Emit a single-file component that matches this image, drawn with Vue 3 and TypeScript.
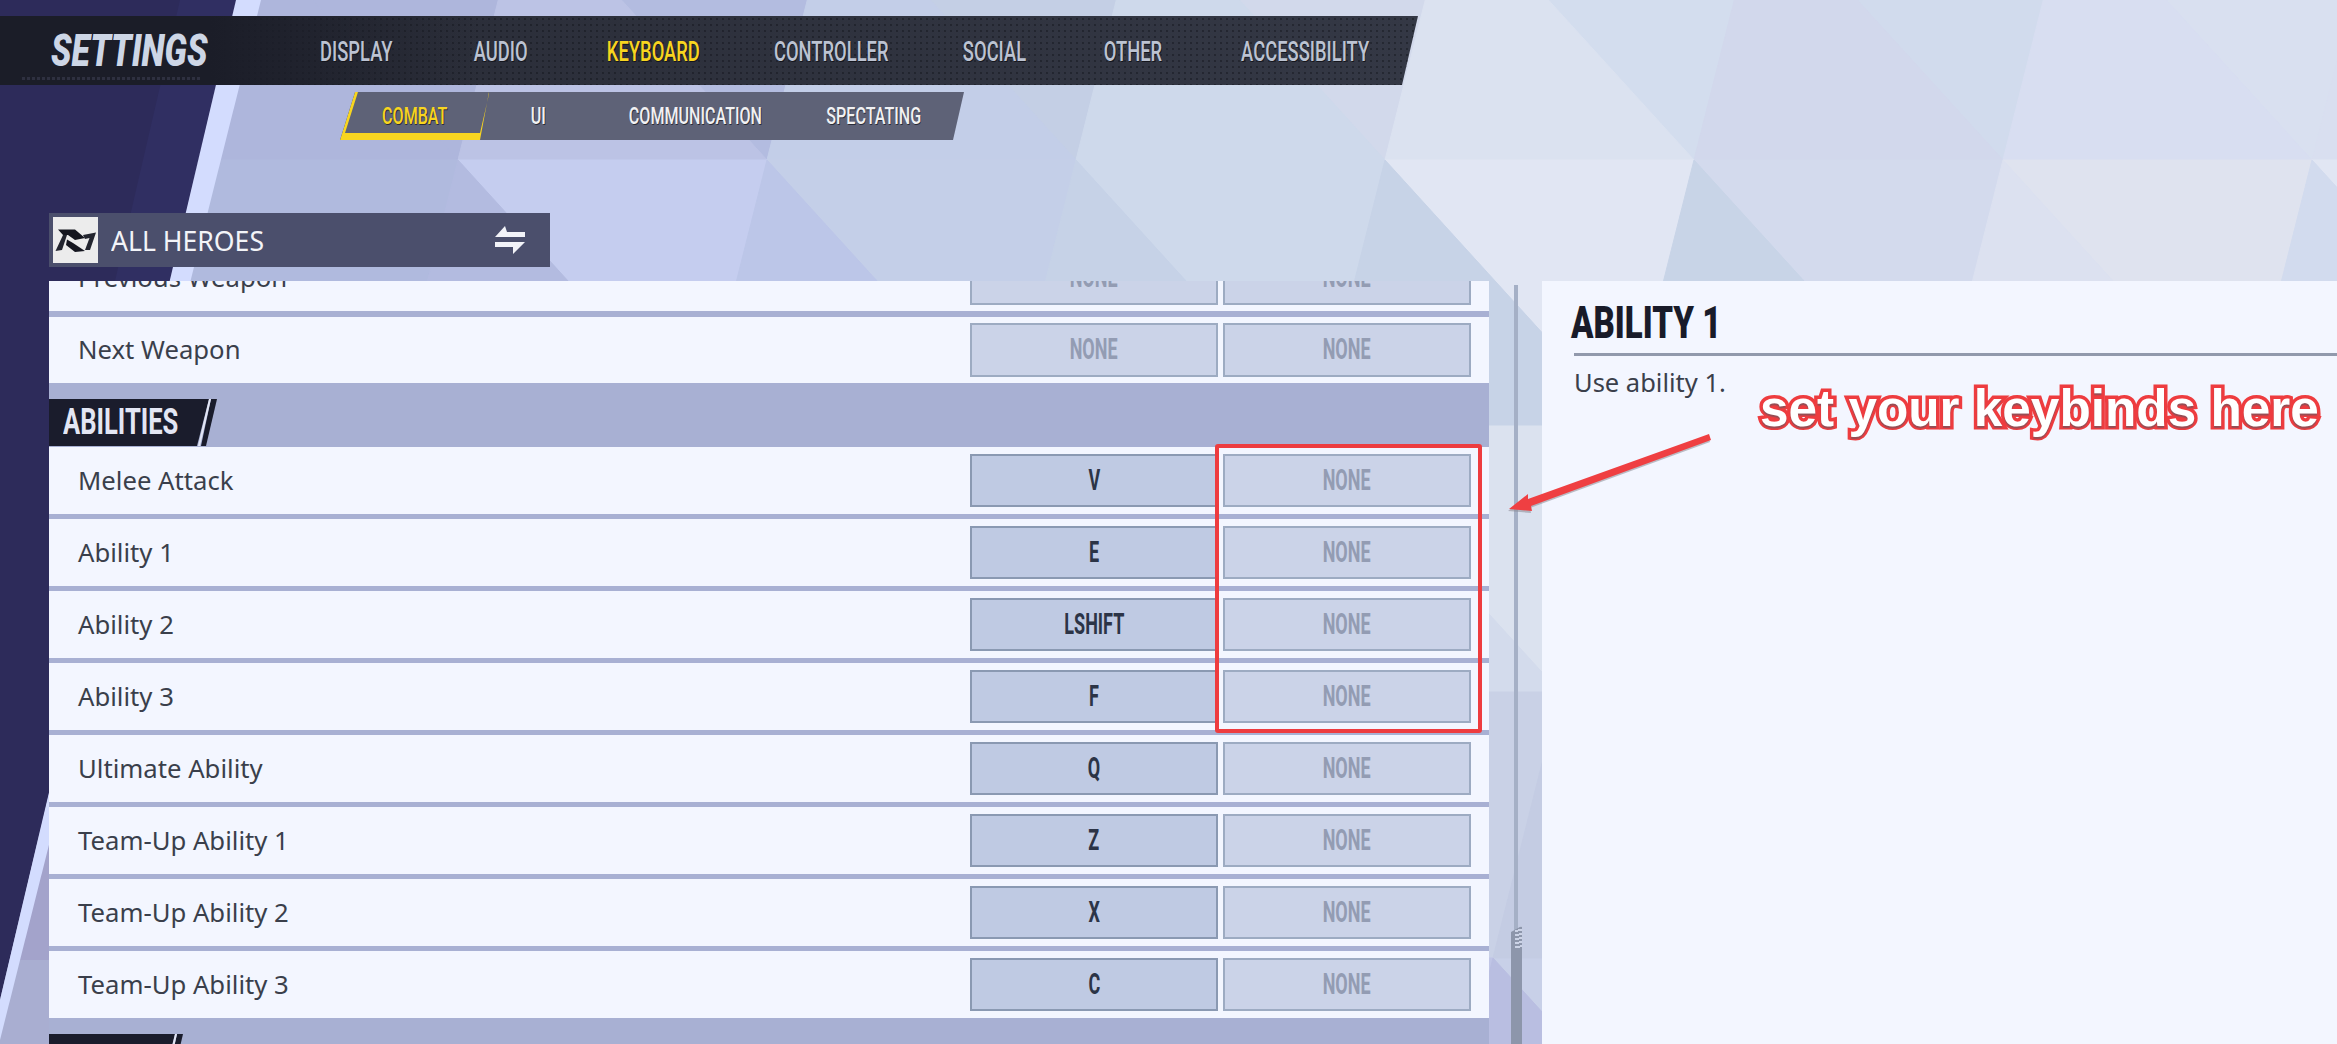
<script setup lang="ts">
type Bind = { label: string; main: string; alt: string };

const navItems = ["DISPLAY", "AUDIO", "KEYBOARD", "CONTROLLER", "SOCIAL", "OTHER", "ACCESSIBILITY"];
const subItems = ["COMBAT", "UI", "COMMUNICATION", "SPECTATING"];

const weaponRows: Bind[] = [
  { label: "Previous Weapon", main: "NONE", alt: "NONE" },
  { label: "Next Weapon", main: "NONE", alt: "NONE" },
];

const abilityRows: Bind[] = [
  { label: "Melee Attack", main: "V", alt: "NONE" },
  { label: "Ability 1", main: "E", alt: "NONE" },
  { label: "Ability 2", main: "LSHIFT", alt: "NONE" },
  { label: "Ability 3", main: "F", alt: "NONE" },
  { label: "Ultimate Ability", main: "Q", alt: "NONE" },
  { label: "Team-Up Ability 1", main: "Z", alt: "NONE" },
  { label: "Team-Up Ability 2", main: "X", alt: "NONE" },
  { label: "Team-Up Ability 3", main: "C", alt: "NONE" },
];

// low-poly backdrop: a skewed lattice, every cell split into two triangles
const at = (r: number, k: number) => `${1694 + 309 * k - 67 * r},${160 + 266 * r}`;

const tris: [number, number, "A" | "B", string][] = [
  [-1, -5, "A", "#aeb6dc"], [-1, -5, "B", "#aeb6dc"],
  [-1, -4, "A", "#b3bce0"], [-1, -4, "B", "#bcc3e5"],
  [-1, -3, "A", "#c4cfe5"], [-1, -3, "B", "#c3cee8"],
  [-1, -2, "A", "#d2d9eb"], [-1, -2, "B", "#ced9eb"],
  [-1, -1, "A", "#d3ddee"], [-1, -1, "B", "#dbe2f0"],
  [-1, 0, "A", "#d1dbed"], [-1, 0, "B", "#d2d8ec"],
  [-1, 1, "A", "#d9e0f0"], [-1, 1, "B", "#d8def1"],
  [-1, 2, "A", "#dfe5f3"], [-1, 2, "B", "#d9dff0"],
  [0, -6, "A", "#b0bade"], [0, -5, "A", "#b0bade"], [0, -5, "B", "#b0bade"],
  [0, -4, "A", "#c5cdef"], [0, -4, "B", "#b3bbe0"],
  [0, -3, "A", "#c4cfe8"], [0, -3, "B", "#bcc6e8"],
  [0, -2, "A", "#ced9eb"], [0, -2, "B", "#c6d2e7"],
  [0, -1, "A", "#e1e6f3"], [0, -1, "B", "#c7d3e7"],
  [0, 0, "A", "#d3daed"], [0, 0, "B", "#c8d4e7"],
  [0, 1, "A", "#dfe3ef"], [0, 1, "B", "#dce1f0"],
  [0, 2, "A", "#e1e6f3"], [0, 2, "B", "#d2dbee"],
  [1, -1, "A", "#dbe2ef"], [1, -1, "B", "#d3dbec"],
  [2, -1, "A", "#c9d1e6"], [2, 0, "B", "#c4cce3"],
  [3, -1, "A", "#c0c5e6"], [3, 0, "B", "#b9bee1"],
];

const polys = tris.map(([r, k, kind, fill]) => ({
  fill,
  points:
    kind === "A"
      ? `${at(r, k)} ${at(r, k + 1)} ${at(r + 1, k + 1)}`
      : `${at(r, k)} ${at(r + 1, k + 1)} ${at(r + 1, k)}`,
}));
</script>

<template>
  <div class="page">
    <svg class="backdrop" width="2337" height="1044" viewBox="0 0 2337 1044">
      <rect width="2337" height="1044" fill="#c8d0e8" />
      <polygon v-for="(p, i) in polys" :key="i" :points="p.points" :fill="p.fill" :stroke="p.fill" stroke-width="1" />
      <polygon points="0,760 60,760 60,960 0,960" fill="#a3a3cb" />
      <polygon points="0,960 60,960 60,1044 0,1044" fill="#a9aed1" />
      <polygon points="0,0 238,0 0,1000" fill="#2d2b5a" />
      <polygon points="180,0 238,0 170,281 115,281" fill="#302f62" />
      <polygon points="236,0 261,0 0,1040 0,1000" fill="#d3dcfe" />
    </svg>

    <header class="topbar">
      <div class="title-cell"><span class="title">SETTINGS</span></div>
      <nav class="nav">
        <div v-for="item in navItems" :key="item" class="nav-cell">
          <span class="nav-text" :class="{ active: item === 'KEYBOARD' }">{{ item }}</span>
        </div>
      </nav>
    </header>

    <div class="subbar">
      <div v-for="item in subItems" :key="item" class="sub-cell" :class="{ active: item === 'COMBAT' }">
        <span class="sub-text">{{ item }}</span>
      </div>
    </div>

    <div class="heroes">
      <div class="hero-logo">
        <svg width="45" height="46" viewBox="0 0 45 46">
          <polygon points="5,12.5 22,12.5 32,21 22,23 15,18 10,18" fill="#15161f" />
          <polygon points="10,18 14,18 9,33 2.5,34" fill="#23252f" />
          <polygon points="14,22.5 20,26 32,34 22,35 13,28" fill="#15161f" />
          <polygon points="30,18 43,15.5 37,33 32,33 36.5,21 32,22" fill="#23252f" />
        </svg>
      </div>
      <span class="hero-name">ALL HEROES</span>
      <svg class="swap" width="30" height="30" viewBox="0 0 30 30">
        <polygon points="0,12 10,1 12,7 30,7 30,12" fill="#f2f3f8" />
        <polygon points="0,17 30,17 18,29 18,22 0,22" fill="#f2f3f8" />
      </svg>
    </div>

    <main class="content">
      <section class="list">
        <div class="scroller">
          <div class="group first">
            <div v-for="row in weaponRows" :key="row.label" class="row">
              <span class="label">{{ row.label }}</span>
              <div class="keys">
                <div class="key empty"><span class="key-text">{{ row.main }}</span></div>
                <div class="key empty"><span class="key-text">{{ row.alt }}</span></div>
              </div>
            </div>
          </div>
          <div class="section">
            <div class="badge"><span class="badge-text">ABILITIES</span></div>
          </div>
          <div class="group">
            <div v-for="row in abilityRows" :key="row.label" class="row">
              <span class="label">{{ row.label }}</span>
              <div class="keys">
                <div class="key" :class="{ empty: row.main === 'NONE' }"><span class="key-text">{{ row.main }}</span></div>
                <div class="key empty"><span class="key-text">{{ row.alt }}</span></div>
              </div>
            </div>
          </div>
          <div class="section next">
            <div class="badge"></div>
          </div>
        </div>
      </section>

      <div class="track">
        <div class="rail"></div>
        <div class="thumb"></div>
      </div>

      <aside class="detail">
        <h2 class="detail-title"><span>ABILITY 1</span></h2>
        <p class="detail-text">Use ability 1.</p>
      </aside>
    </main>

    <div class="callout-box"></div>
    <svg class="callout-arrow" width="2337" height="1044" viewBox="0 0 2337 1044">
      <g transform="translate(-1 2)" fill="#8b8b94" opacity="0.55">
        <polygon points="1709,434 1711,440 1531,506 1532,511 1509,509 1528,494 1528,499" />
      </g>
      <polygon points="1709,434 1711,440 1531,506 1532,511 1509,509 1528,494 1528,499" fill="#ef3f42" />
    </svg>
    <div class="callout-text">set your keybinds here</div>
  </div>
</template>

<style scoped>
.page {
  position: relative;
  width: 2337px;
  height: 1044px;
  overflow: hidden;
  padding-top: 16px;
  box-sizing: border-box;
  font-family: "Roboto", "Liberation Sans", sans-serif;
}

.backdrop {
  position: absolute;
  left: 0;
  top: 0;
}

.topbar {
  position: relative;
  display: flex;
  width: 1418px;
  height: 69px;
  clip-path: polygon(0 0, 100% 0, 1402px 100%, 0 100%);
  background:
    linear-gradient(90deg, #1b1d28 210px, rgba(27, 29, 40, 0) 480px),
    radial-gradient(circle, rgba(14, 16, 22, 0.4) 1px, transparent 1.5px) 0 0 / 6px 6px,
    linear-gradient(90deg, #2a2d38 300px, #343845 100%);
}

.title-cell {
  position: relative;
  width: 279px;
  padding-left: 51px;
  box-sizing: border-box;
  line-height: 69px;
}

.title-cell::after {
  content: "";
  position: absolute;
  left: 22px;
  top: 61px;
  width: 178px;
  height: 3px;
  background: repeating-linear-gradient(90deg, #2e3040 0 3px, transparent 3px 5px);
}

.title {
  display: inline-block;
  font-size: 45px;
  font-weight: 900;
  font-style: italic;
  color: #cdd6e6;
  transform: scaleX(0.75);
  transform-origin: left center;
  white-space: nowrap;
}

.nav {
  display: grid;
  grid-template-columns: 154px 135px 170px 186px 140px 137px 208px;
}

.nav-cell {
  display: flex;
  justify-content: center;
  align-items: center;
  padding-top: 2px;
}

.nav-text {
  font-size: 27px;
  font-weight: 500;
  color: #bcc3d2;
  transform: scaleX(0.68);
  white-space: nowrap;
  text-shadow: 1px 1px 0 #14151c;
}

.nav-text.active {
  color: #f8d520;
}

.subbar {
  position: relative;
  display: grid;
  grid-template-columns: 149px 98px 216px 142px;
  width: 624px;
  height: 48px;
  margin: 7px 0 0 340px;
  background: #5e6277;
  clip-path: polygon(15px 0, 100% 0, 613px 100%, 0 100%);
}

.sub-cell {
  position: relative;
  display: flex;
  justify-content: center;
  align-items: center;
}

.sub-cell.active::before {
  content: "";
  position: absolute;
  inset: 0;
  background: #f8d520;
  clip-path: polygon(15px 0, 18px 0, 5px 41px, 140px 41px, 149px 2px, 149px 0, 140px 48px, 0 48px);
}

.sub-text {
  position: relative;
  font-size: 24px;
  font-weight: 500;
  color: #f1f1f3;
  transform: scaleX(0.67);
  white-space: nowrap;
  text-shadow: 1px 1px 0 #2a2c38;
}

.sub-cell.active .sub-text {
  color: #f8d520;
}

.heroes {
  position: relative;
  display: flex;
  align-items: center;
  width: 501px;
  height: 54px;
  margin: 73px 0 0 49px;
  padding-left: 4px;
  box-sizing: border-box;
  background: #4b4f6c;
}

.hero-logo {
  display: flex;
  width: 45px;
  height: 46px;
  background: #ececec;
}

.hero-name {
  margin-left: 13px;
  font-family: "Noto Sans", sans-serif;
  font-size: 28px;
  color: #f3f4f8;
  white-space: nowrap;
  transform: scaleX(0.95);
  transform-origin: left center;
}

.swap {
  margin-left: auto;
  margin-right: 25px;
}

.content {
  position: relative;
  display: flex;
  height: 763px;
  margin-top: 14px;
  padding-left: 49px;
}

.list {
  width: 1440px;
  overflow: hidden;
  background: #a8b0d3;
}

.scroller {
  margin-top: -36px;
}

.group {
  display: flex;
  flex-direction: column;
  gap: 5px;
}

.row {
  display: flex;
  justify-content: space-between;
  height: 67px;
  padding: 7px 18px 0 29px;
  box-sizing: border-box;
  background: #f3f6ff;
}

.group.first {
  gap: 6px;
}

.group.first .row {
  height: 66px;
  padding-top: 6px;
}

.group.first .key {
  height: 54px;
}

.label {
  font-family: "Noto Sans", sans-serif;
  font-size: 25.7px;
  line-height: 54px;
  color: #3a3f4b;
  white-space: nowrap;
}

.keys {
  display: flex;
  gap: 5px;
}

.key {
  display: flex;
  justify-content: center;
  align-items: center;
  width: 248px;
  height: 53px;
  padding-bottom: 2px;
  box-sizing: border-box;
  border: 2px solid #8a99b2;
  background: #bfcae3;
  color: #2c3446;
}

.key.empty {
  border-color: #9dabc2;
  background: #cbd3e8;
  color: #939cb3;
}

.key-text {
  font-size: 29px;
  font-weight: 700;
  transform: scaleX(0.62);
  white-space: nowrap;
}

.section {
  --badge-w: 160px;
  position: relative;
  height: 64px;
  padding-top: 16px;
  box-sizing: border-box;
}

.section.next {
  --badge-w: 126px;
  height: 80px;
}

.badge {
  width: var(--badge-w);
  height: 47px;
  padding-left: 14px;
  box-sizing: border-box;
  background: #1a1c2c;
  clip-path: polygon(0 0, 100% 0, calc(100% - 12px) 100%, 0 100%);
  line-height: 47px;
}

.section::before,
.section::after {
  content: "";
  position: absolute;
  top: 16px;
  width: 24px;
  height: 47px;
}

.section::before {
  left: calc(var(--badge-w) - 12px);
  background: #1a1c2c;
  clip-path: polygon(14px 0, 20px 0, 9px 100%, 4px 100%);
}

.section::after {
  left: calc(var(--badge-w) - 14px);
  background: #e3e6f4;
  clip-path: polygon(14px 0, 16px 0, 5px 100%, 3px 100%);
}

.badge-text {
  display: inline-block;
  font-size: 36px;
  font-weight: 700;
  color: #e3e6f4;
  transform: scaleX(0.71);
  transform-origin: left center;
  white-space: nowrap;
}

.track {
  position: relative;
  width: 53px;
}

.rail {
  position: absolute;
  left: 25px;
  top: 4px;
  bottom: 100px;
  width: 4px;
  background: #a5b0c6;
}

.thumb {
  position: absolute;
  left: 22px;
  top: 645px;
  bottom: 0;
  width: 11px;
  background: #8d96ab;
  clip-path: polygon(0 6px, 100% 0, 100% 100%, 0 100%);
}

.thumb::before {
  content: "";
  position: absolute;
  right: 0;
  top: 0;
  width: 7px;
  height: 22px;
  background: repeating-linear-gradient(170deg, #ccd3e6 0 2px, #8d96ab 2px 4px);
}

.detail {
  flex: 1;
  padding: 18px 0 0 29px;
  background: #f3f6ff;
}

.detail-title {
  margin: 0;
  height: 54px;
  border-bottom: 3px solid #9199ac;
  line-height: 48px;
  margin-left: 3px;
}

.detail-title span {
  display: inline-block;
  margin-left: -3px;
  font-size: 44px;
  font-weight: 900;
  color: #191b29;
  transform: scaleX(0.75);
  transform-origin: left center;
  white-space: nowrap;
}

.detail-text {
  margin: 9px 0 0 3px;
  font-family: "Noto Sans", sans-serif;
  font-size: 25.5px;
  color: #3a3f4b;
}

.callout-box {
  position: absolute;
  left: 1215px;
  top: 444px;
  width: 267px;
  height: 289px;
  box-sizing: border-box;
  border: 4px solid #ee3c3f;
  border-radius: 3px;
}

.callout-arrow {
  position: absolute;
  left: 0;
  top: 0;
}

.callout-text {
  position: absolute;
  left: 1760px;
  top: 379px;
  font-family: "Liberation Sans", sans-serif;
  font-size: 51.3px;
  font-weight: 700;
  line-height: 60px;
  color: #fff;
  white-space: nowrap;
  -webkit-text-stroke: 7px #ee3c3f;
  paint-order: stroke fill;
  text-shadow: 0 2px 1px rgba(90, 90, 100, 0.6);
}
</style>
<style>
html,
body {
  margin: 0;
  background: #c8d0e8;
}
</style>
